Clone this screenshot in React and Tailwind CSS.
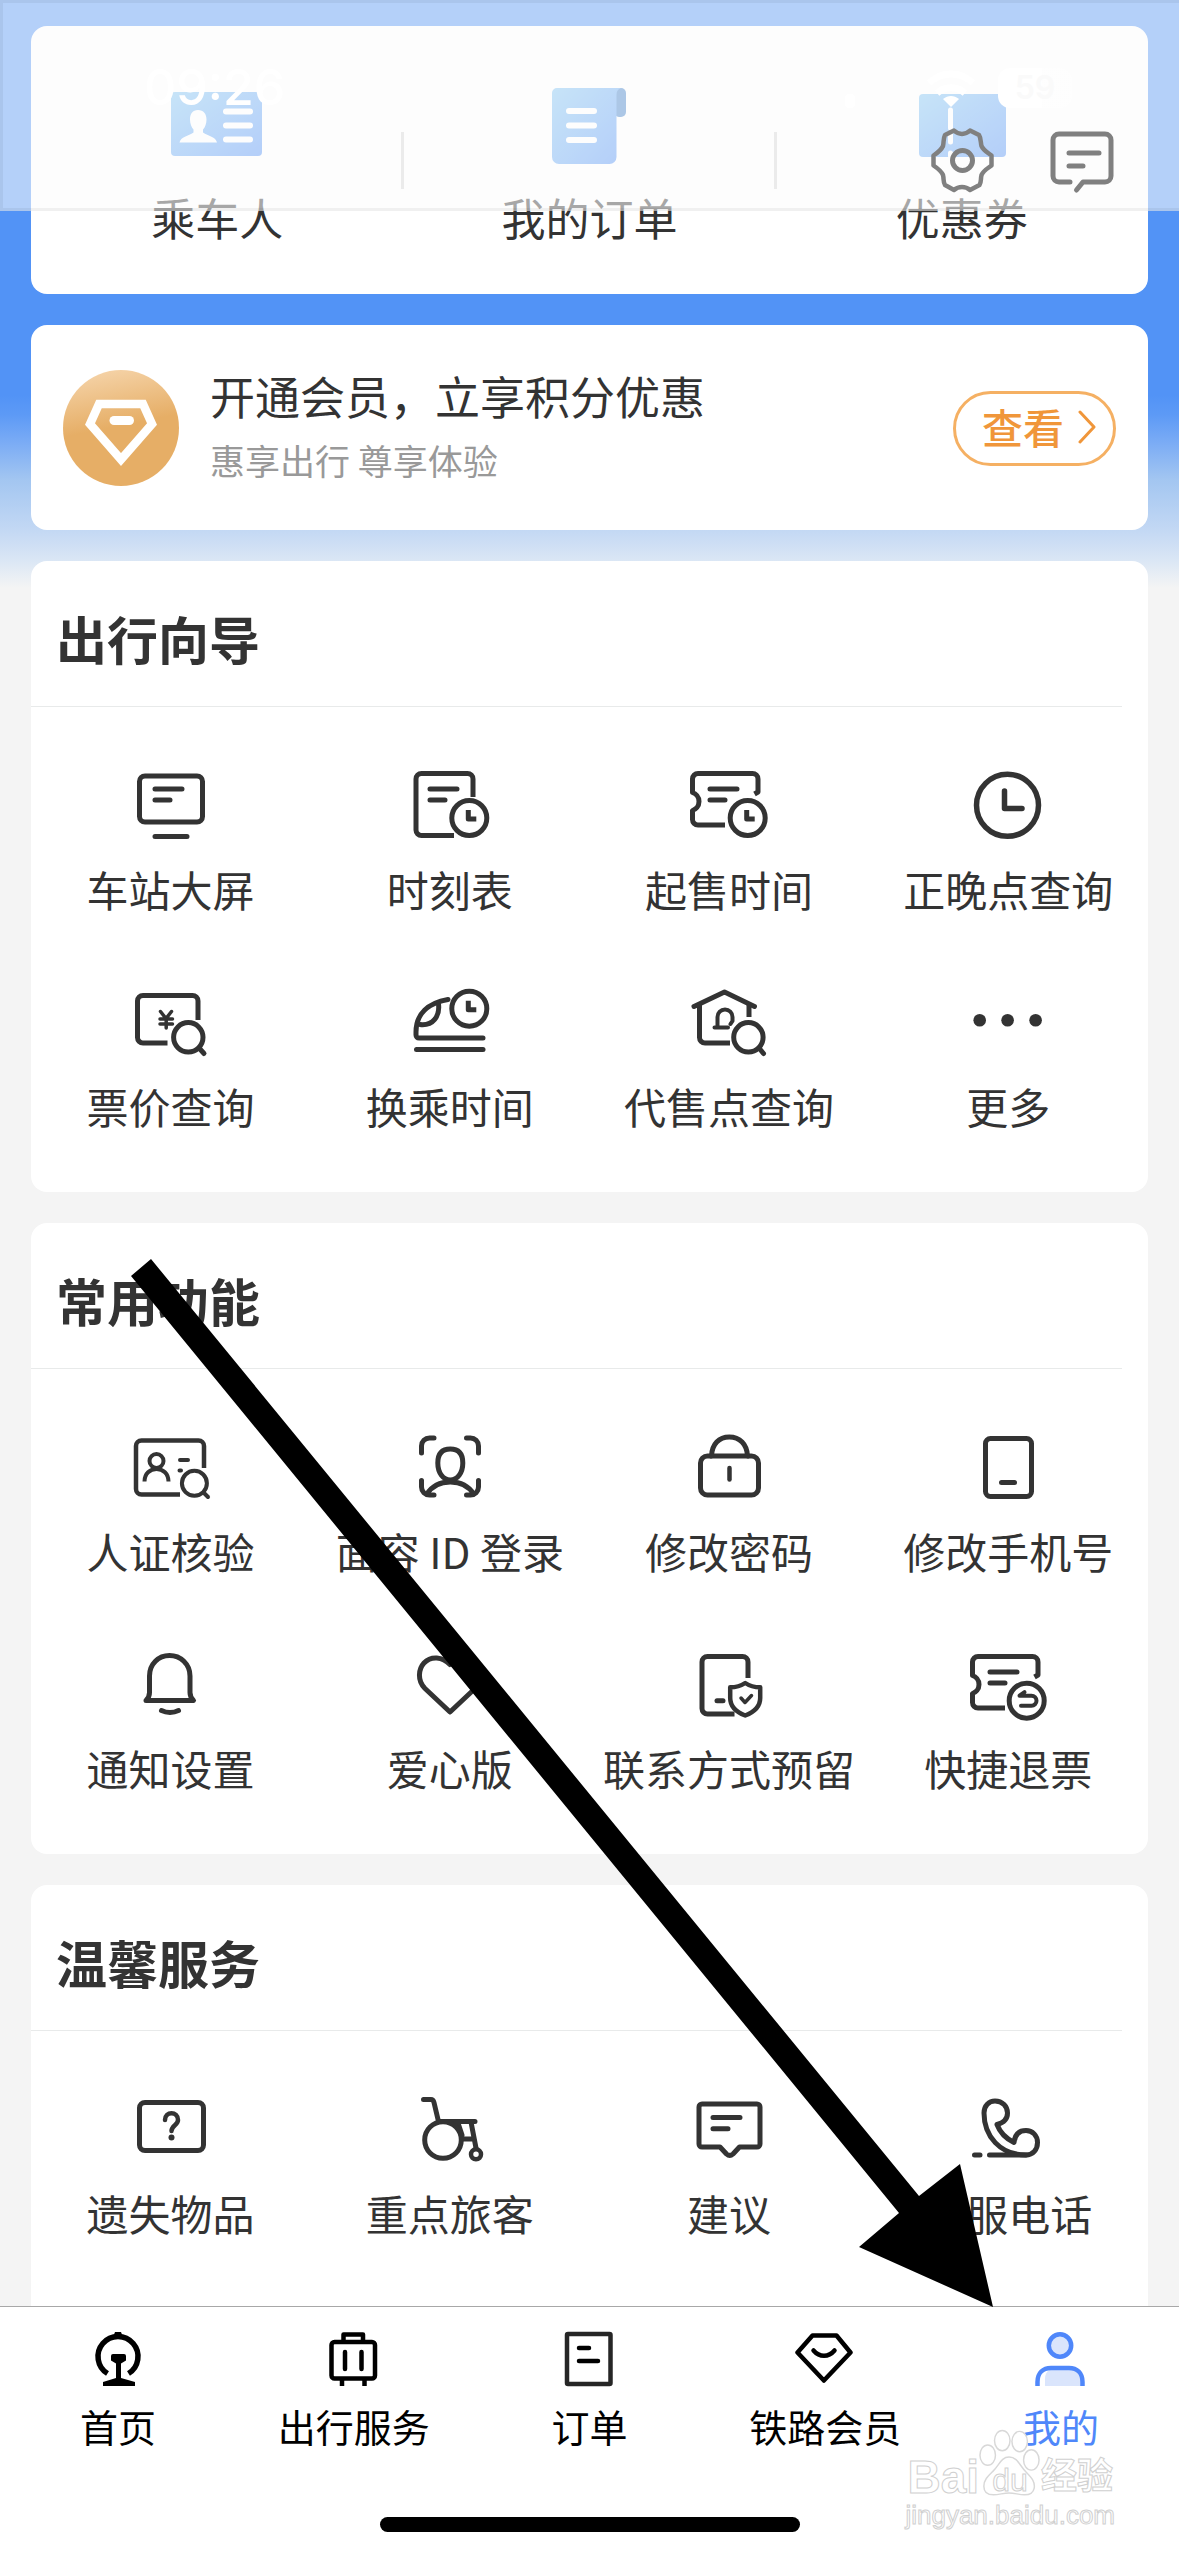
function Icon({ children, className = 'w-[84px] h-[84px]', box = 84, width = 5 }) {
  return (
    <svg
      viewBox={`0 0 ${box} ${box}`}
      className={className}
      fill="none"
      stroke="currentColor"
      strokeWidth={width}
      strokeLinecap="round"
      strokeLinejoin="round"
      aria-hidden="true"
    >
      {children}
    </svg>
  );
}

function MiniClock({ cx, cy }) {
  return (
    <>
      <circle cx={cx} cy={cy} r="17.5" />
      <path d={`M${cx - 1} ${cy - 8}v9h8`} strokeLinecap="butt" />
    </>
  );
}

function Ticket() {
  return (
    <>
      <path d="M38 62H11a5.500 5.500 0 0 1-5.500-5.500V47.500c3-1 6.500-4 6.500-9s-3.500-8-6.500-9V16a5.500 5.500 0 0 1 5.500-5.500H65.500a5.500 5.500 0 0 1 5.500 5.500V29l-3.500 2" strokeLinecap="butt" />
      <path d="M23 26H50M23 37H38" />
    </>
  );
}

const icons = {
  screen: (
    <>
      <rect x="10.500" y="13" width="63" height="46" rx="5.500" />
      <path d="M26 26H53M26 37H41M26 73.500H58" />
    </>
  ),
  timetable: (
    <>
      <path d="M65 34V16a5.500 5.500 0 0 0-5.500-5.500H13.500a5.500 5.500 0 0 0-5.500 5.500V67a5.500 5.500 0 0 0 5.500 5.500H46" strokeLinecap="butt" />
      <path d="M22 26H49M22 37H37" />
      <MiniClock cx={61.3} cy={55} />
    </>
  ),
  saleTime: (
    <>
      <Ticket />
      <MiniClock cx={60.7} cy={55} />
    </>
  ),
  clock: (
    <>
      <circle cx="41.500" cy="42.300" r="31" strokeWidth="5.500" />
      <path d="M38.500 28V45.500H56" strokeWidth="5.500" />
    </>
  ),
  price: (
    <>
      <path d="M69 40V21a5.500 5.500 0 0 0-5.500-5.500H14a5.500 5.500 0 0 0-5.500 5.500V57.500a5.500 5.500 0 0 0 5.500 5.500H38.500" strokeLinecap="butt" />
      <path d="M31.500 31.500l5.500 7 5.500-7M31 39H43.500M31 44H43.500M37.200 39V48" strokeWidth="3.500" />
      <circle cx="59.300" cy="57.300" r="14.700" />
      <path d="M70 68l5 5.500" />
    </>
  ),
  transfer: (
    <>
      <path d="M40 19.500C20 23 8 34 8 52v3a3 3 0 0 0 3 3H75" />
      <path d="M30.500 24C32 36 25 46 12 44.500" />
      <path d="M8.500 69.500H75" />
      <MiniClock cx={61.3} cy={28.7} />
    </>
  ),
  agency: (
    <>
      <path d="M7 26.500L37.500 12 67.500 26.500" />
      <path d="M12.500 25V57.500a5.500 5.500 0 0 0 5.500 5.500H43M62 25V37" strokeLinecap="butt" />
      <path d="M30.500 47V37a7.500 7.500 0 0 1 15 0v4l-2 3M27.500 47.500H41" strokeWidth="4" />
      <circle cx="61.400" cy="57.300" r="14.700" />
      <path d="M72 68l4.500 5.500" />
    </>
  ),
  more: (
    <g fill="currentColor" stroke="none">
      <circle cx="13.700" cy="40.300" r="6.300" />
      <circle cx="41.600" cy="40.300" r="6.300" />
      <circle cx="69.600" cy="40.300" r="6.300" />
    </g>
  ),
  idCheck: (
    <>
      <path d="M75 43V21a5.500 5.500 0 0 0-5.500-5.500H12.500a5.500 5.500 0 0 0-5.500 5.500V64a5.500 5.500 0 0 0 5.500 5.500H51" strokeLinecap="butt" strokeWidth="4.500" />
      <circle cx="27.500" cy="36" r="7" strokeWidth="4" />
      <path d="M15.500 56.500c0-8 5.500-12.500 12-12.500s12 4.500 12 12.500" strokeWidth="4" strokeLinecap="butt" />
      <path d="M51 35H59M50.500 45.500H52" strokeWidth="4" />
      <circle cx="65.400" cy="58.300" r="12.500" strokeWidth="4" />
      <path d="M74.500 67.500l4.500 4.500" strokeWidth="4" />
    </>
  ),
  face: (
    <>
      <path d="M13.500 28V21a8 8 0 0 1 8-8H26M58.500 13H62.500a8 8 0 0 1 8 8V28M70.500 55.500V62a8 8 0 0 1-8 8H58.500M26 70H21.500a8 8 0 0 1-8-8V55.500" />
      <path d="M42.300 24c8.500 0 12.500 5 12.500 14 0 10-5.500 17-12.500 17s-12.500-7-12.500-17c0-9 4-14 12.500-14z" />
      <path d="M19 69c5-8 14-12 23.300-12s18.300 4 23.300 12" />
    </>
  ),
  lock: (
    <>
      <rect x="13.500" y="31" width="58" height="39" rx="7" />
      <path d="M24.500 31C25 19 32 12 42.300 12S60 19 60.500 31" />
      <path d="M42.500 43V54.500" strokeWidth="4.500" />
    </>
  ),
  phone: (
    <>
      <rect x="19.500" y="13.500" width="46" height="58" rx="5" />
      <path d="M35.500 57.500H48.500" />
    </>
  ),
  bell: (
    <>
      <path d="M17 58.500c2.500-2.500 3.500-4 3.500-8V34c0-12 9-20.500 20-20.500s20.500 8.500 20.500 20.500V50.500c0 4 1 5.500 3.500 8z" />
      <path d="M32.500 68.500c5 2.500 12 2.500 17 0" />
    </>
  ),
  heart: <path d="M42 70L17 46.500C9 38.500 10.500 27 16 21c7-7.500 18.500-6.500 26 1.500 7.500-8 19-9 26-1.500 5.500 6 7 17.500-1 25.500z" />,
  contact: (
    <>
      <path d="M61 36V20a5.500 5.500 0 0 0-5.500-5.500H20.500a5.500 5.500 0 0 0-5.500 5.500V66.500a5.500 5.500 0 0 0 5.500 5.500H47.500" strokeLinecap="butt" />
      <path d="M30 58.700H36" />
      <path d="M58.200 41c4.500 3 9.500 4.300 15 4.300V56c0 8.500-6 14-15 17.500-9-3.500-15-9-15-17.500V45.300c5.500 0 10.500-1.300 15-4.300z" strokeWidth="4.500" />
      <path d="M54 56l4 4.500 6.500-7" strokeWidth="3.500" />
    </>
  ),
  refund: (
    <>
      <g transform="translate(1 4)">
        <Ticket />
      </g>
      <circle cx="60.700" cy="58.700" r="17.500" />
      <path d="M55 63.700H65.500a5 5 0 0 0 0-10H53.500l5-3.500" strokeWidth="4" />
    </>
  ),
  lost: (
    <>
      <rect x="10.500" y="15.500" width="64" height="48" rx="5.500" />
      <path d="M36 33c0-9 13-9 13 0 0 5-6.500 5.500-6.500 11" strokeWidth="4.500" />
      <circle cx="42.500" cy="50.500" r="3" fill="currentColor" stroke="none" />
    </>
  ),
  wheelchair: (
    <>
      <path d="M15.500 12.500H23c2 0 2.500 1 3 3L30.500 34.500H67M63 35l5 26M54 52H65.500M50 36l4 12" />
      <circle cx="35" cy="53" r="18.300" />
      <circle cx="68" cy="67.300" r="5" strokeWidth="4.500" />
    </>
  ),
  suggest: (
    <>
      <path d="M15 17H70a3 3 0 0 1 3 3V57a3 3 0 0 1-3 3H52.500l-6.500 7c-2 1.800-4.500 1.800-6.500 0L33 60H15a3 3 0 0 1-3-3V20a3 3 0 0 1 3-3z" />
      <path d="M26 30.500H53M26 41.700H41" />
    </>
  ),
  call: (
    <>
      <path d="M60 68c-26 0-42-19-42-42 0-7.500 5-12 11-12 7.500 0 12.500 5.500 12.500 12 0 5.500-3 9.500-10.500 11.500 3 8 9 14 17 18 1-9 6-12 12-12 6.500 0 11.500 5 11.500 12S67 68 60 68z" />
      <path d="M23.500 68H60M8.500 68H14" />
    </>
  ),
};

const sections = [
  {
    title: '出行向导',
    items: [
      ['screen', '车站大屏'],
      ['timetable', '时刻表'],
      ['saleTime', '起售时间'],
      ['clock', '正晚点查询'],
      ['price', '票价查询'],
      ['transfer', '换乘时间'],
      ['agency', '代售点查询'],
      ['more', '更多'],
    ],
  },
  {
    title: '常用功能',
    items: [
      ['idCheck', '人证核验'],
      ['face', '面容 ID 登录'],
      ['lock', '修改密码'],
      ['phone', '修改手机号'],
      ['bell', '通知设置'],
      ['heart', '爱心版'],
      ['contact', '联系方式预留'],
      ['refund', '快捷退票'],
    ],
  },
  {
    title: '温馨服务',
    items: [
      ['lost', '遗失物品'],
      ['wheelchair', '重点旅客'],
      ['suggest', '建议'],
      ['call', '客服电话'],
    ],
  },
];

const shortcuts = [
  {
    label: '乘车人',
    icon: (
      <>
        <rect x="-4" y="8" width="91" height="64" rx="4" fill="url(#tile)" />
        <path d="M23 26c5.500 0 8.500 4 8.500 9.500 0 4-1.500 8-3.500 10v3c5 3.500 13 4.500 14 10H4.500c1-5.500 9-6.500 14-10v-3c-2-2-3.500-6-3.500-10C15 30 17.500 26 23 26z" fill="#fff" />
        <path d="M51 27.500H75M51 41.500H75M51 55.500H75" stroke="#fff" strokeWidth="6" strokeLinecap="round" />
      </>
    ),
  },
  {
    label: '我的订单',
    icon: (
      <>
        <rect x="67" y="4" width="12" height="29" rx="5" fill="#3e7fc8" />
        <path d="M10 4H74c-3 1-4.500 3-4.500 7V73a7 7 0 0 1-7 7H12a7 7 0 0 1-7-7V9a5 5 0 0 1 5-5z" fill="url(#tile)" />
        <path d="M22 27H47M22 41.500H47M22 56H47" stroke="#fff" strokeWidth="6" strokeLinecap="round" />
      </>
    ),
  },
  {
    label: '优惠券',
    icon: (
      <>
        <rect x="-1" y="10" width="87" height="63" rx="4" fill="url(#tile)" />
        <path d="M30.500 26V44M30.500 50V58M30.500 69V72" stroke="#fff" strokeWidth="5" strokeLinecap="round" />
      </>
    ),
  },
];

const tabs = [
  {
    label: '首页',
    icon: (
      <>
        <path d="M19.500 44.500A20 20 0 1 1 40.500 44.500" strokeWidth="5.500" strokeLinecap="butt" />
        <path d="M27 3h6l2 5H25z" fill="currentColor" stroke="none" />
        <path d="M25 25H36a2 2 0 0 1 2 2v4.500l-5 3V49l14 4v4H15V53l13-4V34.500l-5-3V27a2 2 0 0 1 2-2z" fill="currentColor" stroke="none" />
      </>
    ),
  },
  {
    label: '出行服务',
    icon: (
      <>
        <rect x="7.500" y="13" width="43.500" height="36.500" rx="3" />
        <path d="M19.500 11V5.500H39V11M18 51v6M40.500 51v6" strokeLinecap="butt" />
        <path d="M21 23V40M37.500 23V40" />
      </>
    ),
  },
  {
    label: '订单',
    icon: (
      <>
        <rect x="8" y="5" width="43.500" height="50" rx="1" stroke="#262626" />
        <path d="M20 19H30M20 32H39" />
      </>
    ),
  },
  {
    label: '铁路会员',
    icon: (
      <>
        <path d="M17.500 6.500H41.500L55.500 23.500 28.900 51.500 2.500 23.500z" />
        <path d="M18.500 21.500c6 7 15 7 21 0" />
      </>
    ),
  },
  {
    label: '我的',
    active: true,
    icon: (
      <>
        <circle cx="29" cy="16.500" r="11.200" fill="#dae5fc" />
        <path d="M14 57V50c0-6 3-10 9-10H39c8 0 12 4 12 11v6z" fill="#dae5fc" stroke="none" />
        <path d="M6.500 57V53C6.500 44 12 39 20 39H38c8 0 13.500 5 13.500 14v4" strokeLinecap="butt" />
      </>
    ),
  },
];

function StatusBar() {
  return (
    <header className="absolute inset-x-0 top-0 h-[211px] border-t-3 border-b-3 border-l-3 border-black/5 bg-[#fcfcfc]/58">
      <div className="flex h-[57px] items-end mt-[48px] pl-[141px] pr-[107px] text-white font-['Inter',sans-serif]">
        <span className="text-[50px] leading-[42px] font-medium">09:26</span>
        <span className="ml-auto mr-[71px] h-[14px] w-[10px] rounded-sm bg-white" />
        <svg viewBox="0 0 50 38" className="w-[50px] h-[38px]" fill="none" stroke="#fff" strokeWidth="7" aria-hidden="true">
          <path d="M3 13C16 1 34 1 47 13" />
          <path d="M11 23c8-7 20-7 28 0" />
          <path d="M25 37l-8-8c5-4 11-4 16 0z" fill="#fff" stroke="none" />
        </svg>
        <span className="ml-[22px] h-[40px] w-[74px] rounded-xl bg-linear-to-r from-white from-60% to-white/40 to-60% text-center text-[32px] leading-[40px] font-semibold text-[#fafafa]">59</span>
      </div>
      <div className="absolute right-[66px] top-[122px] flex gap-[50px] text-[#808080]">
        <button type="button" aria-label="设置">
          <Icon box={70} className="w-[70px] h-[70px]">
            <path d="M27 5.500c4.500 4.500 11.500 4.500 16 0l9 4.500c2 3 1.500 7 2.500 11 2 4.500 6 6.500 10 9.500v10c-4 3-8 5-10 9.500-1 4 0 7-2 10l-9.500 5c-4.500-4-11.500-4-16 0l-9-5c-2-3-1-6-2-10-2-4.500-5-6.500-9.500-9.500v-10c4.500-3 7.500-5 9.500-9.500 1-4 0-7 2-11z" strokeWidth="4.500" />
            <circle cx="35.500" cy="35.500" r="10" />
          </Icon>
        </button>
        <button type="button" aria-label="消息" className="-mr-1">
          <Icon box={70} className="w-[70px] h-[70px]">
            <path d="M23 57H12a6 6 0 0 1-6-6V15a6 6 0 0 1 6-6H58a6 6 0 0 1 6 6V51a6 6 0 0 1-6 6H36l-6.500 8" />
            <path d="M22 28H52M22 41H36" />
          </Icon>
        </button>
      </div>
    </header>
  );
}

function Section({ title, items }) {
  return (
    <section className="shrink-0 rounded-2xl bg-white pb-[64px] last:pb-[90px]">
      <h2 className="mr-[26px] border-b border-[#e8eaea] pt-[47px] pb-[38px] pl-[25px] text-[51px] leading-[60px] font-bold">{title}</h2>
      <div className="grid grid-cols-4 gap-y-[69px] pt-[56px]">
        {items.map(([icon, label]) => (
          <button key={label} type="button" className="flex flex-col items-center gap-[20px]">
            <Icon>{icons[icon]}</Icon>
            <span className="text-[42px] leading-[44px] whitespace-nowrap">{label}</span>
          </button>
        ))}
      </div>
    </section>
  );
}

function Watermark() {
  return (
    <div className="pointer-events-none absolute right-[64px] bottom-[24px] text-white font-['Liberation_Sans','Noto_Sans_CJK_SC',sans-serif] [-webkit-text-stroke:1px_#d0d0d0]">
      <div className="flex items-end justify-center">
        <span className="text-[46px] leading-[42px] font-bold">Bai</span>
        <span className="relative flex h-[70px] w-[62px] items-end justify-center">
          <svg viewBox="0 0 64 70" className="absolute inset-0" fill="#fff" stroke="#d8d8d8" strokeWidth="1.500" aria-hidden="true">
            <ellipse cx="9" cy="28" rx="8" ry="10.500" />
            <ellipse cx="24" cy="13" rx="8" ry="10.500" />
            <ellipse cx="42" cy="14" rx="8" ry="10.500" />
            <ellipse cx="54" cy="33" rx="8" ry="10.500" />
            <path d="M31 30c9 0 11 9 18 16 6 6 9 10 8 16-1 5-5 7-10 7-6 0-10-2-16-2s-10 2-16 2-10-3-10-9c0-7 5-11 10-16 6-6 8-14 16-14z" />
          </svg>
          <span className="relative text-[32px] leading-[36px]">du</span>
        </span>
        <span className="text-[36px] leading-[42px] font-bold">经验</span>
      </div>
      <p className="text-[26px] leading-[34px]">jingyan.baidu.com</p>
    </div>
  );
}

export default function App() {
  return (
    <div className="relative flex h-screen flex-col overflow-hidden bg-[#f4f4f4] text-[#333] font-['Noto_Sans_CJK_SC',sans-serif]">
      <main className="flex min-h-0 flex-1 flex-col gap-[31px] overflow-hidden px-[31px] pt-[26px] bg-[linear-gradient(180deg,#5293f6_0px,#5293f6_395px,#5d9af6_415px,#7bacf5_443px,#a3c6f1_480px,#c3d8f4_530px,#dae6f5_560px,#f4f4f4_588px)]">
        <svg className="absolute w-0 h-0" aria-hidden="true">
          <defs>
            <linearGradient id="tile" x1="0" y1="0" x2="1" y2="1">
              <stop offset="0" stopColor="#7ec3f3" />
              <stop offset="1" stopColor="#5190f6" />
            </linearGradient>
          </defs>
        </svg>

        <section className="flex shrink-0 items-center rounded-2xl bg-white">
          {shortcuts.map((s, i) => (
            <div key={s.label} className="relative flex-1">
              <button type="button" className="flex w-full flex-col items-center gap-[25px] pt-[58px] pb-[53px]">
                <svg viewBox="0 0 84 84" className="w-[84px] h-[84px] overflow-visible" fill="none" aria-hidden="true">
                  {s.icon}
                </svg>
                <span className="text-[44px] leading-[48px]">{s.label}</span>
              </button>
              {i < 2 && <span className="absolute -right-px top-[106px] h-[57px] w-[3px] bg-[#d4d4d4]" />}
            </div>
          ))}
        </section>

        <section className="flex shrink-0 items-center rounded-2xl bg-white px-[32px] pt-[45px] pb-[44px]">
          <svg viewBox="0 0 116 116" className="w-[116px] h-[116px]" aria-hidden="true">
            <defs>
              <linearGradient id="gold" x1="0.300" y1="0" x2="0.500" y2="1">
                <stop offset="0" stopColor="#f5d3a8" />
                <stop offset="0.500" stopColor="#e6ae66" />
                <stop offset="1" stopColor="#e6ae66" />
              </linearGradient>
            </defs>
            <circle cx="58" cy="58" r="58" fill="url(#gold)" />
            <path d="M36 34H80L89 54 58 89.500 27 54z" fill="none" stroke="#fff" strokeWidth="8.500" />
            <path d="M51 50.500H66.500" stroke="#fff" strokeWidth="9" strokeLinecap="round" />
          </svg>
          <div className="ml-[31px] flex flex-1 flex-col gap-[16px] pb-[4px]">
            <h2 className="text-[45px] leading-[52px]">开通会员，立享积分优惠</h2>
            <p className="text-[35px] leading-[44px] text-[#999]">惠享出行 尊享体验</p>
          </div>
          <button type="button" className="flex h-[75px] w-[163px] items-center justify-end gap-[14px] rounded-full border-3 border-[#f5b063] pr-[17px] pb-[2px] text-[41px] font-medium text-[#f0963a]">
            查看
            <svg viewBox="0 0 18 36" className="w-[18px] h-[36px]" fill="none" stroke="currentColor" strokeWidth="3" strokeLinecap="round" strokeLinejoin="round" aria-hidden="true">
              <path d="M2 3l14 15L2 33" />
            </svg>
          </button>
        </section>

        {sections.map((s) => (
          <Section key={s.title} title={s.title} items={s.items} />
        ))}
      </main>

      <nav className="shrink-0 border-t border-[#a8a8a8] bg-white">
        <div className="grid grid-cols-5 pt-[22px]">
          {tabs.map((t) => (
            <a key={t.label} href="#" className={t.active ? 'flex flex-col items-center gap-[15px] text-[#4f87fa]' : 'flex flex-col items-center gap-[15px] text-black'}>
              <Icon box={60} width={4.5} className="w-[60px] h-[60px]">{t.icon}</Icon>
              <span className="text-[38px] leading-[44px]">{t.label}</span>
            </a>
          ))}
        </div>
        <div className="mx-auto mt-[69px] mb-[24px] h-[15px] w-[420px] rounded-full bg-black" />
      </nav>

      <StatusBar />
      <Watermark />

      {/* pointer from the list down to the "我的" tab */}
      <svg viewBox="0 0 862 1048" className="pointer-events-none absolute left-[131px] top-[1259px] w-[862px] h-[1048px]" aria-hidden="true">
        <path d="M20 0L788 937 829 905 862 1048 728 988 768 954 0 17z" fill="#000" />
      </svg>
    </div>
  );
}
